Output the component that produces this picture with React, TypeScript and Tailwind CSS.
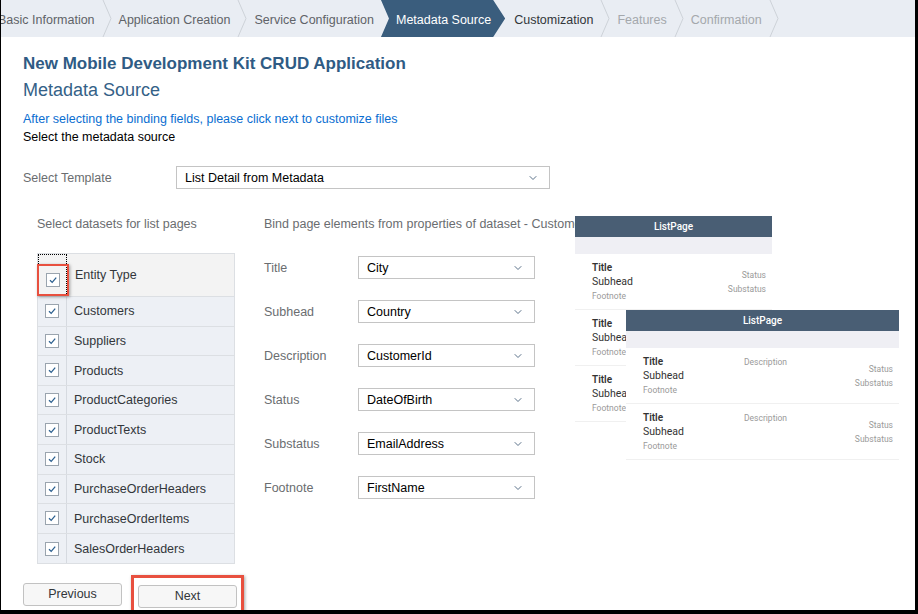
import { ChevronDown } from "lucide-react";

const steps = [
  { label: "Basic Information", state: "done" },
  { label: "Application Creation", state: "done" },
  { label: "Service Configuration", state: "done" },
  { label: "Metadata Source", state: "current" },
  { label: "Customization", state: "next" },
  { label: "Features", state: "disabled" },
  { label: "Confirmation", state: "disabled" },
];

const datasets = [
  "Customers",
  "Suppliers",
  "Products",
  "ProductCategories",
  "ProductTexts",
  "Stock",
  "PurchaseOrderHeaders",
  "PurchaseOrderItems",
  "SalesOrderHeaders",
];

const bindings = [
  { label: "Title", value: "City" },
  { label: "Subhead", value: "Country" },
  { label: "Description", value: "CustomerId" },
  { label: "Status", value: "DateOfBirth" },
  { label: "Substatus", value: "EmailAddress" },
  { label: "Footnote", value: "FirstName" },
];

function Separator() {
  return (
    <svg width="10" height="37" viewBox="0 0 10 37" className="shrink-0">
      <polyline points="1,0 9,18.5 1,37" fill="none" stroke="#cdd2d8" strokeWidth="1" />
    </svg>
  );
}

function Checkbox() {
  return (
    <div className="w-[14px] h-[14px] border border-[#9aa4ae] bg-white flex items-center justify-center">
      <svg width="10" height="10" viewBox="0 0 10 10">
        <polyline points="2,5.2 4.2,7.4 8.2,2.6" fill="none" stroke="#2b5f8f" strokeWidth="1.3" />
      </svg>
    </div>
  );
}

function SelectBox({ value, className }: { value: string; className: string }) {
  return (
    <div className={`h-[23px] border border-[#c4c4c4] bg-white flex items-center justify-between pl-[8px] pr-[10px] text-[12.5px] text-black ${className}`}>
      <span className="pt-[1px]">{value}</span>
      <ChevronDown className="w-[12px] h-[12px] text-[#5a7189]" strokeWidth={2} />
    </div>
  );
}

function PreviewItem({ description }: { description?: boolean }) {
  return (
    <div className="h-[56px] border-b border-[#f0f0f0] flex pl-[17px] pr-[6px]">
      <div className={`pt-[7px] leading-[14px] ${description ? "w-[101px]" : "flex-1"}`}>
        <div className="text-[10px] font-semibold text-[#333]">Title</div>
        <div className="text-[10.5px] text-[#333]">Subhead</div>
        <div className="text-[8.5px] text-[#9a9a9a]">Footnote</div>
      </div>
      {description && (
        <div className="flex-1 pt-[7px] leading-[14px] text-[8.5px] text-[#9a9a9a]">Description</div>
      )}
      <div className="pt-[14px] leading-[14px] text-right text-[8.5px] text-[#9a9a9a]">
        <div>Status</div>
        <div>Substatus</div>
      </div>
    </div>
  );
}

function PreviewHeader() {
  return (
    <>
      <div className="h-[21px] bg-[#495e74] flex items-center justify-center text-[10px] font-medium text-white">
        ListPage
      </div>
      <div className="h-[17px] bg-[#efeff4]" />
    </>
  );
}

export default function App() {
  return (
    <div
      className="relative w-[918px] h-[614px] overflow-hidden bg-white border-l border-r-[3px] border-b-[4px] border-black"
      style={{ fontFamily: '"Liberation Sans", Arial, sans-serif' }}
    >
      {/* Wizard steps */}
      <div className="h-[37px] bg-[#e9edf3] flex items-center text-[12.5px] whitespace-nowrap">
        <div className="flex items-center -ml-[10px]">
          {steps.map((s, i) => {
            const nextIsCurrent = steps[i + 1]?.state === "current";
            if (s.state === "current") {
              return (
                <div
                  key={s.label}
                  className="h-[37px] bg-[#3a5d7d] text-white flex items-center pt-[3px] pl-[15px] pr-[14px] mr-[2px] [clip-path:polygon(0_0,calc(100%-12px)_0,100%_50%,calc(100%-12px)_100%,0_100%,8px_50%)]"
                >
                  {s.label}
                </div>
              );
            }
            const color =
              s.state === "done" ? "text-[#5f6368]" : s.state === "next" ? "text-[#32363a]" : "text-[#a4a8ac]";
            return (
              <div key={s.label} className="flex items-center">
                <span className={`px-[7px] pt-[3px] ${color}`}>{s.label}</span>
                {!nextIsCurrent && <Separator />}
              </div>
            );
          })}
        </div>
      </div>

      <div className="pl-[22px] pt-[17px]">
        <h1 className="text-[17px] leading-[20px] font-bold text-[#2f5b84]">
          New Mobile Development Kit CRUD Application
        </h1>
        <h2 className="mt-[5px] text-[18px] leading-[22px] text-[#346187]">Metadata Source</h2>
        <p className="mt-[9px] text-[12.5px] leading-[18px] text-[#0a6ed1]">
          After selecting the binding fields, please click next to customize files
        </p>
        <p className="text-[12.5px] leading-[18px] text-black">Select the metadata source</p>

        <div className="mt-[20px] flex items-center">
          <span className="w-[153px] pt-[1px] text-[12.5px] text-[#6a6d70]">Select Template</span>
          <SelectBox value="List Detail from Metadata" className="w-[374px]" />
        </div>

        <div className="mt-[26px] flex">
          {/* Datasets */}
          <div className="w-[241px] pl-[14px] shrink-0">
            <div className="text-[12.5px] leading-[18px] text-[#6a6d70]">Select datasets for list pages</div>
            <div className="mt-[20px] w-[198px] border border-[#dcdfe3]">
              <div className="h-[43px] bg-[#f3f3f3] flex border-b border-[#dcdfe3]">
                <div className="relative w-[29px] border border-dotted border-black flex items-end justify-center pb-[8px]">
                  <Checkbox />
                  <div className="absolute left-[-2px] right-[-3px] top-[9px] bottom-[-1px] border-[2px] border-[#e8503f] shadow-[1px_1px_3px_rgba(0,0,0,0.35)]" />
                </div>
                <div className="flex-1 pl-[8px] pt-[12px] text-[12.5px] text-[#32363a]">Entity Type</div>
              </div>
              {datasets.map((d) => (
                <div key={d} className="h-[29.6px] bg-[#edf0f5] flex border-b border-[#dcdfe3] last:border-b-0">
                  <div className="w-[29px] border-r border-[#d6dae0] flex items-center justify-center">
                    <Checkbox />
                  </div>
                  <div className="flex-1 pl-[7px] pt-[1px] flex items-center text-[12.5px] text-[#32363a]">{d}</div>
                </div>
              ))}
            </div>
          </div>

          {/* Bindings */}
          <div className="w-[311px] shrink-0">
            <div className="text-[12.5px] leading-[18px] text-[#6a6d70] whitespace-nowrap">
              Bind page elements from properties of dataset - Customers
            </div>
            <div className="mt-[23px] flex flex-col gap-[21px]">
              {bindings.map((b) => (
                <div key={b.label} className="flex items-center">
                  <span className="w-[94px] pt-[2px] text-[12.5px] text-[#6a6d70]">{b.label}</span>
                  <SelectBox value={b.value} className="w-[177px]" />
                </div>
              ))}
            </div>
          </div>

          {/* Previews */}
          <div className="relative z-10 mt-[1px] w-[197px] self-start bg-white" style={{ fontFamily: "Roboto, sans-serif" }}>
            <PreviewHeader />
            <PreviewItem />
            <PreviewItem />
            <PreviewItem />
            <div className="absolute left-[51px] top-[94px] w-[273px] bg-white">
              <PreviewHeader />
              <PreviewItem description />
              <PreviewItem description />
            </div>
          </div>
        </div>

        <div className="mt-[19px] flex gap-[16px]">
          <button className="w-[99px] h-[23px] rounded-[3px] border border-[#c2c2c2] bg-[#f7f7f7] text-[12.5px] text-[#32363a]">
            Previous
          </button>
          <div className="relative">
            <button className="w-[99px] h-[23px] rounded-[3px] border border-[#c2c2c2] bg-[#f7f7f7] text-[12.5px] text-[#32363a]">
              Next
            </button>
            <div className="absolute -left-[7px] -right-[7px] -top-[8px] -bottom-[7px] border-[3px] border-[#e8503f] shadow-[1px_1px_3px_rgba(0,0,0,0.35)]" />
          </div>
        </div>
      </div>
    </div>
  );
}
